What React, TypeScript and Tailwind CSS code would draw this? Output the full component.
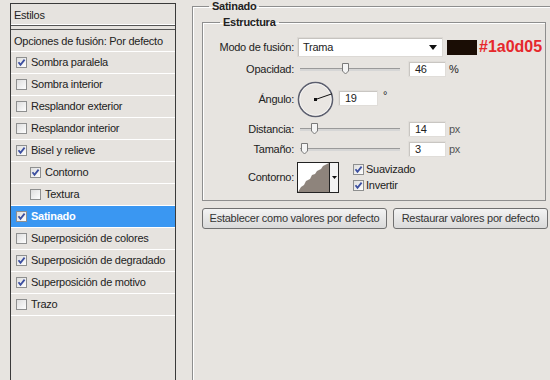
const font = "font-['Liberation_Sans',Arial,sans-serif]";

function Check({ on }: { on: boolean }) {
  return (
    <svg width="11" height="11" viewBox="0 0 11 11" className="shrink-0">
      <defs>
        <linearGradient id="cbg" x1="0" y1="0" x2="1" y2="1">
          <stop offset="0" stopColor="#dcdcdc" />
          <stop offset="1" stopColor="#ffffff" />
        </linearGradient>
      </defs>
      <rect x="0.5" y="0.5" width="10" height="10" fill="url(#cbg)" stroke="#8e8f8f" />
      {on && <path d="M2.5 5.2 L4.5 7.8 L8.6 2.6" fill="none" stroke="#3c4fa0" strokeWidth="1.8" />}
    </svg>
  );
}

function Thumb() {
  return (
    <svg width="9" height="13" viewBox="0 0 9 13">
      <path d="M1.5 1.5 h6 v7.5 l-3 3 l-3 -3 z" fill="#f4f4f4" stroke="#7a7a7a" />
    </svg>
  );
}

function Slider({ pos }: { pos: number }) {
  return (
    <div className="relative w-[106px] h-[14px] flex items-center">
      <div className="ml-[3px] w-[100px] h-[3px] border-t border-[#9a9a9a] border-b-white bg-[#d6d6d6]" />
      <div className="absolute top-0" style={{ left: pos }}>
        <Thumb />
      </div>
    </div>
  );
}

function NumBox({ v, w }: { v: string; w: string }) {
  return (
    <div className={`${w} h-[16px] bg-white border border-[#e0ddd9] shadow-[inset_1px_1px_0_#c9c6c2] pl-[6px] leading-[15px] text-[11px]`}>
      {v}
    </div>
  );
}

const items: { label: string; on: boolean; indent?: boolean; sel?: boolean }[] = [
  { label: "Sombra paralela", on: true },
  { label: "Sombra interior", on: false },
  { label: "Resplandor exterior", on: false },
  { label: "Resplandor interior", on: false },
  { label: "Bisel y relieve", on: true },
  { label: "Contorno", on: true, indent: true },
  { label: "Textura", on: false, indent: true },
  { label: "Satinado", on: true, sel: true },
  { label: "Superposición de colores", on: false },
  { label: "Superposición de degradado", on: true },
  { label: "Superposición de motivo", on: true },
  { label: "Trazo", on: false },
];

export default function App() {
  return (
    <div className={`w-[550px] h-[380px] overflow-hidden bg-[#e7e4e0] text-[#222] text-[11px] tracking-[-0.25px] ${font} flex`}>
      {/* styles list */}
      <div className="ml-[10px] mt-[3px] w-[166px] h-[400px] border border-[#3a3a3a] bg-[#e6e3df] flex flex-col shrink-0">
        <div className="h-[22px] pl-[3px] leading-[22px] border-b border-[#555] shadow-[inset_0_-1px_0_#fff]">Estilos</div>
        <div className="h-[3px]" />
        <div className="h-[23px] pl-[3px] leading-[22px] border-t border-[#555] border-b border-b-white">Opciones de fusión: Por defecto</div>
        {items.map((it) => (
          <div key={it.label} className="h-[22px] border-b border-white">
            <div
              className={`h-[21px] flex items-center gap-[4px] ${it.indent ? "pl-[19px]" : "pl-[5px]"} ${
                it.sel ? "bg-[#3a97f2] text-white font-bold" : ""
              }`}
            >
              <Check on={it.on} />
              <span>{it.label}</span>
            </div>
          </div>
        ))}
      </div>

      {/* satinado panel */}
      <fieldset className="ml-[16px] w-[360px] h-[400px] border border-[#8e8e8e] shadow-[inset_1px_1px_0_#fff] shrink-0">
        <legend className="ml-[16px] px-[3px] font-bold leading-[13px]">Satinado</legend>
        <fieldset className="ml-[9px] mt-[3px] w-[344px] border border-[#8e8e8e] shadow-[inset_1px_1px_0_#fff] pb-[7px]">
          <legend className="ml-[17px] px-[3px] font-bold leading-[13px]">Estructura</legend>

          <div className="mt-[8px] flex items-center h-[20px]">
            <div className="w-[91px] text-right">Modo de fusión:</div>
            <div className="ml-[3px] w-[146px] h-[20px] bg-white border border-[#dcd9d5] shadow-[inset_1px_1px_0_#c6c3bf] flex items-center pl-[5px] justify-between pr-[5px]">
              <span>Trama</span>
              <svg width="8" height="5" viewBox="0 0 8 5">
                <path d="M0 0 h8 l-4 5 z" fill="#111" />
              </svg>
            </div>
            <div className="ml-[4px] w-[30px] h-[15px] bg-[#1a0d05]" />
            <div className="ml-[2px] text-[16px] font-bold text-[#e6282c] leading-none tracking-normal">#1a0d05</div>
          </div>

          <div className="mt-[4px] flex items-center h-[16px]">
            <div className="w-[91px] text-right">Opacidad:</div>
            <div className="ml-[3px]">
              <Slider pos={44} />
            </div>
            <div className="ml-[5px]">
              <NumBox v="46" w="w-[38px]" />
            </div>
            <div className="ml-[3px]">%</div>
          </div>

          <div className="mt-[4px] flex items-center h-[36px]">
            <div className="w-[91px] text-right">Ángulo:</div>
            <svg className="ml-[3px]" width="37" height="37" viewBox="0 0 37 37">
              <circle cx="18.5" cy="18.5" r="17" fill="#e9e6e2" stroke="#5b5e6e" strokeWidth="1.6" />
              <circle cx="18.5" cy="18.5" r="15.8" fill="none" stroke="#fff" strokeWidth="0.6" />
              <line x1="18.5" y1="18.5" x2="35" y2="12.8" stroke="#111" strokeWidth="1" />
              <rect x="17" y="17" width="3" height="3" fill="#111" />
            </svg>
            <div className="ml-[4px] -mt-[2px]">
              <NumBox v="19" w="w-[40px]" />
            </div>
            <div className="ml-[5px] -mt-[8px]">°</div>
          </div>

          <div className="mt-[4px] flex items-center h-[16px]">
            <div className="w-[91px] text-right">Distancia:</div>
            <div className="ml-[3px]">
              <Slider pos={13} />
            </div>
            <div className="ml-[5px]">
              <NumBox v="14" w="w-[38px]" />
            </div>
            <div className="ml-[3px] text-[#555]">px</div>
          </div>

          <div className="mt-[4px] flex items-center h-[16px]">
            <div className="w-[91px] text-right">Tamaño:</div>
            <div className="ml-[3px]">
              <Slider pos={3} />
            </div>
            <div className="ml-[5px]">
              <NumBox v="3" w="w-[38px]" />
            </div>
            <div className="ml-[3px] text-[#555]">px</div>
          </div>

          <div className="mt-[5px] flex items-center h-[31px]">
            <div className="w-[91px] text-right">Contorno:</div>
            <div className="ml-[3px] w-[42px] h-[31px] border border-[#222] bg-white flex">
              <svg width="31" height="29" viewBox="0 0 31 29">
                <path
                  d="M0 29 L3 24 L6 22 L8 18 L12 16 L14 12 L17 11 L19 8 L23 6 L25 3 L29 1 L31 0 L31 29 Z"
                  fill="#8e847c"
                />
              </svg>
              <div className="w-[9px] border-l border-[#222] flex items-center justify-center bg-[#f3f3f3]">
                <svg width="5" height="3" viewBox="0 0 5 3">
                  <path d="M0 0 h5 l-2.5 3 z" fill="#111" />
                </svg>
              </div>
            </div>
            <div className="ml-[14px] flex flex-col gap-[5px]">
              <div className="flex items-center gap-[2px] h-[11px]">
                <Check on />
                <span>Suavizado</span>
              </div>
              <div className="flex items-center gap-[2px] h-[11px]">
                <Check on />
                <span>Invertir</span>
              </div>
            </div>
          </div>
        </fieldset>

        <div className="mt-[7px] ml-[9px] flex gap-[6px]">
          <button className="w-[185px] h-[21px] rounded-[3px] border border-[#707070] bg-gradient-to-b from-[#f3f3f3] to-[#dadada] text-[11px] text-[#333]">
            Establecer como valores por defecto
          </button>
          <button className="w-[155px] h-[21px] rounded-[3px] border border-[#707070] bg-gradient-to-b from-[#f3f3f3] to-[#dadada] text-[11px] text-[#333]">
            Restaurar valores por defecto
          </button>
        </div>
      </fieldset>
    </div>
  );
}
